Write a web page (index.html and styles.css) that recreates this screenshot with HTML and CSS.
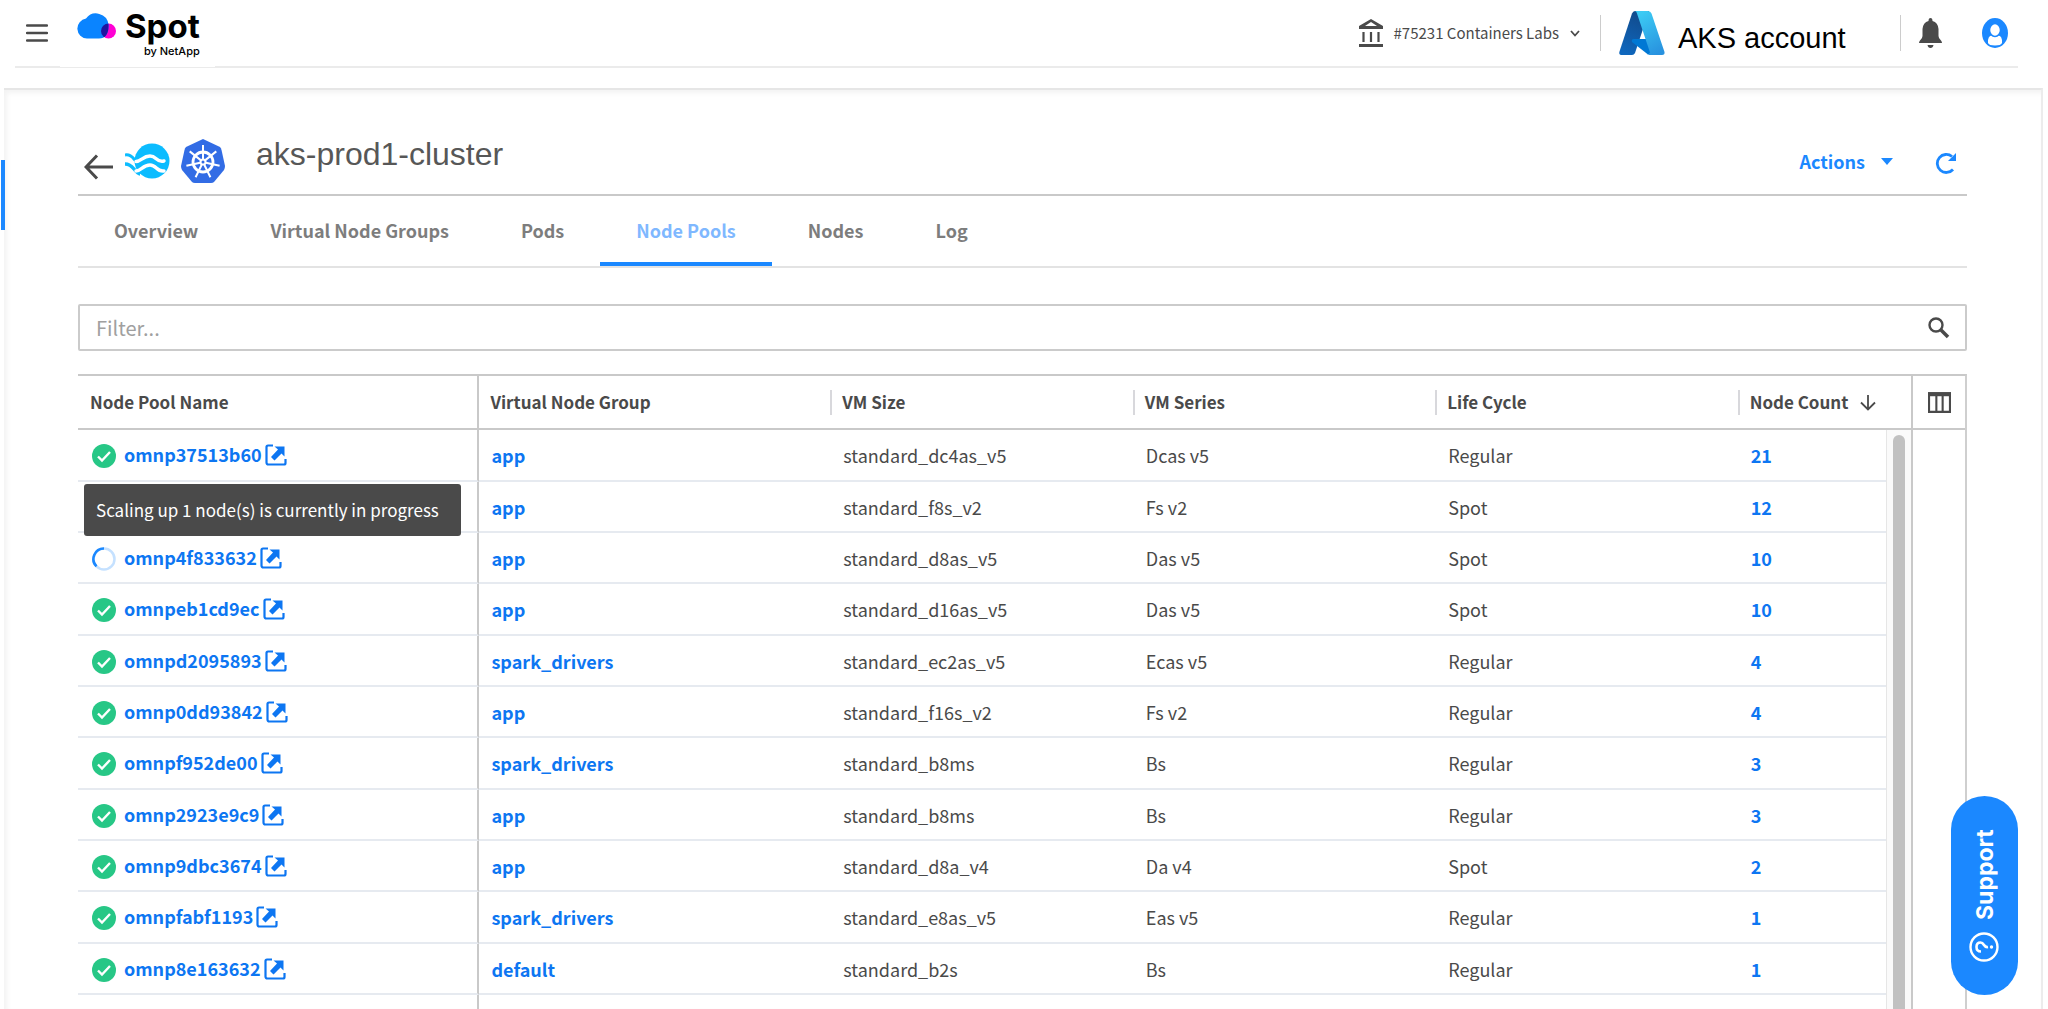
FILE: index.html
```html
<!DOCTYPE html>
<html lang="en">
<head>
<meta charset="utf-8">
<title>aks-prod1-cluster – Node Pools</title>
<link rel="stylesheet" href="styles.css">
</head>
<body>
<svg class="sprite" aria-hidden="true">
  <symbol id="ok" viewBox="0 0 24 24"><circle cx="12" cy="12" r="12" fill="#27c786"/><path d="M6 12.500l4 4 8-8.500" fill="none" stroke="#fff" stroke-width="2.400"/></symbol>
  <symbol id="busy" viewBox="0 0 24 24"><circle cx="12" cy="12" r="10.500" fill="none" stroke="#c5e1ff" stroke-width="2.500"/><path d="M12 1.500A10.500 10.500 0 0 0 4.500 19.400" fill="none" stroke="#1b88ff" stroke-width="2.500"/></symbol>
  <symbol id="open" viewBox="0 0 22 22"><path d="M8 1.500H3Q1.500 1.500 1.500 3V18.500Q1.500 20.500 3.500 20.500H19Q20.500 20.500 20.500 19V15" fill="none" stroke="#0d76f2" stroke-width="2.200"/><path d="M9.500 2.500H19.500V12.500L16.500 9.500 9.500 16.500 6 13 13 5.500z" fill="#0d76f2"/></symbol>
</svg>

<header class="topbar">
  <button class="icon-btn menu" aria-label="Menu"><svg width="22" height="18" viewBox="0 0 22 18"><path d="M1 1.500h20M1 9h20M1 16.500h20" stroke="#4a4a4a" stroke-width="2.400" stroke-linecap="round"/></svg></button>
  <a class="brand" href="#" aria-label="Spot by NetApp">
    <svg width="40" height="27" viewBox="0 0 40 27"><defs><clipPath id="cloud"><path d="M10 25.500A10 10 0 0 1 9 5.600A12.500 12.500 0 0 1 31.500 11.500Q32 25.500 22 25.500z"/></clipPath></defs><circle cx="31.500" cy="18" r="7.500" fill="#ff00d4"/><g clip-path="url(#cloud)"><path d="M0 0h40v27H0z" fill="#0a84ff"/><circle cx="31.500" cy="18" r="7.500" fill="#1f14a0"/></g></svg>
    <span class="brand-text"><span class="brand-name">Spot</span><span class="brand-by">by NetApp</span></span>
  </a>
  <button class="org">
    <svg width="24" height="29" viewBox="0 0 24 29"><path d="M12 0L24 7V10H0V7z M12 3L6 7H18z" fill="#4a4a4a" fill-rule="evenodd"/><path d="M4.500 13v10M12 13v10M19.500 13v10" stroke="#4a4a4a" stroke-width="2.200"/><path d="M0 25h24v3H0z" fill="#4a4a4a"/></svg>
    <span>#75231 Containers Labs</span>
    <svg width="10" height="7" viewBox="0 0 10 7"><path d="M1 1l4 4.500L9 1" fill="none" stroke="#4a4a4a" stroke-width="1.800"/></svg>
  </button>
  <div class="account">
    <svg width="46" height="44" viewBox="0 0 46 44"><defs><linearGradient id="a1" x1=".6" y1="0" x2=".3" y2="1"><stop offset="0" stop-color="#114a8b"/><stop offset="1" stop-color="#0f67bd"/></linearGradient><linearGradient id="a2" x1=".3" y1="0" x2=".7" y2="1"><stop offset="0" stop-color="#3ccbf4"/><stop offset="1" stop-color="#2892df"/></linearGradient></defs><path d="M16 0H30L16 42Q15 44 13 44H3Q-.5 44 .5 40.500L13 2.500Q14 0 16 0z" fill="url(#a1)"/><path d="M20 28H37V40L29 43.500 13 31Q12 28 15 28z" fill="#0078d4"/><path d="M16 0H29Q31.500 0 32.500 2.500L45.500 41Q46 44 43 44H28Q32 43.500 30.500 40L18 2.500Q17.500 0 16 0z" fill="url(#a2)"/></svg>
    <span>AKS account</span>
  </div>
  <div class="tools">
    <button class="icon-btn" aria-label="Notifications"><svg width="23" height="30" viewBox="0 0 23 30"><path d="M11.500 0Q13.500 0 13.500 3Q19 4.500 19.500 11V18Q19.500 20.500 22 22.500 23 23.500 23 25H0Q0 23.500 1 22.500 3.500 20.500 3.500 18V11Q4 4.500 9.500 3Q9.500 0 11.500 0zM8.500 27H14.500Q14 30 11.500 30T8.500 27z" fill="#4a4a4a"/></svg></button>
    <button class="icon-btn" aria-label="Profile"><svg width="28" height="30" viewBox="0 0 28 30"><ellipse cx="14" cy="15" rx="13" ry="15" fill="#1b88ff"/><path d="M7 25Q6.500 17.500 11 17.500H17Q21.500 17.500 21 25Q20 27.500 14 27.500T7 25z" fill="#fff"/><ellipse cx="14" cy="12" rx="5.500" ry="6.500" fill="#fff" stroke="#1b88ff" stroke-width="1.500"/></svg></button>
  </div>
</header>

<main class="panel">
  <div class="title-bar">
    <button class="icon-btn back" aria-label="Back"><svg width="30" height="26" viewBox="0 0 30 26"><path d="M29 13H2M13 1.500L2 13 13 24.500" fill="none" stroke="#4a4a4a" stroke-width="3"/></svg></button>
    <svg class="ocean" width="45" height="36" viewBox="0 0 45 36"><circle cx="27" cy="18" r="17.500" fill="#0cbcff"/><path d="M0 12Q5 11 9 16T16 20" fill="none" stroke="#0cbcff" stroke-width="3"/><path d="M0 21Q5 21 9 26T15 31" fill="none" stroke="#0cbcff" stroke-width="3.500"/><path d="M11 18.500C16 18.500 18 13 25 13S31 20 39 18M11 28C16 28 18 22 25 22S31 29 39 28" fill="none" stroke="#fff" stroke-width="3.400" stroke-linecap="round"/></svg>
    <svg class="kube" width="44" height="44" viewBox="0 0 44 44"><path d="M22 0L39 8Q40 9 40.500 11L44 27Q44 29 43 31L33 43Q32 44 30 44H14Q12 44 11 43L1 31Q0 29 0 27L3.500 11Q4 9 5 8z" fill="#326ce5"/><g fill="none" stroke="#fff" stroke-width="2"><circle cx="22" cy="23" r="10" stroke-width="2.800"/><circle cx="22" cy="23" r="2.500"/><path d="M22 20V6M24.300 21.100L35.300 12.400M24.900 23.700L38.600 26.800M23.300 25.700L29.400 38.300M20.700 25.700L14.600 38.300M19.100 23.700L5.400 26.800M19.700 21.100L8.700 12.400"/></g></svg>
    <h1>aks-prod1-cluster</h1>
    <button class="actions">Actions <svg width="12" height="7" viewBox="0 0 12 7"><path d="M0 0h12L6 7z" fill="#1b88ff"/></svg></button>
    <button class="icon-btn refresh" aria-label="Refresh"><svg width="22" height="22" viewBox="0 0 22 22"><path d="M18 17.500A9 9 0 1 1 17 4.500" fill="none" stroke="#1b88ff" stroke-width="2.800"/><path d="M21 1V9H13z" fill="#1b88ff"/></svg></button>
  </div>

  <nav class="tabs">
    <a href="#">Overview</a><a href="#">Virtual Node Groups</a><a href="#">Pods</a><a href="#" class="active" aria-current="page">Node Pools</a><a href="#">Nodes</a><a href="#">Log</a>
  </nav>

  <label class="filter">
    <input type="text" placeholder="Filter..." aria-label="Filter">
    <svg width="22" height="22" viewBox="0 0 22 22"><circle cx="8" cy="8" r="6.500" fill="none" stroke="#4a4a4a" stroke-width="2.400"/><path d="M12.500 12.500L20 20" stroke="#4a4a4a" stroke-width="3.600"/></svg>
  </label>

  <section class="grid">
    <div class="grid-main">
      <table>
        <colgroup><col class="c-name"><col class="c-vng"><col class="c-mid"><col class="c-mid"><col class="c-mid"><col></colgroup>
        <thead><tr><th>Node Pool Name</th><th>Virtual Node Group</th><th>VM Size</th><th>VM Series</th><th>Life Cycle</th><th>Node Count <svg width="16" height="16" viewBox="0 0 16 16"><path d="M8 0V14M1 7.500l7 7 7-7" fill="none" stroke="#4a4a4a" stroke-width="1.800"/></svg></th></tr></thead>
        <tbody>
          <tr><td><svg class="st"><use href="#ok"/></svg><a href="#">omnp37513b60<svg class="ext"><use href="#open"/></svg></a></td><td><a href="#">app</a></td><td>standard_dc4as_v5</td><td>Dcas v5</td><td>Regular</td><td><a href="#">21</a></td></tr>
          <tr><td></td><td><a href="#">app</a></td><td>standard_f8s_v2</td><td>Fs v2</td><td>Spot</td><td><a href="#">12</a></td></tr>
          <tr><td><svg class="st"><use href="#busy"/></svg><a href="#">omnp4f833632<svg class="ext"><use href="#open"/></svg></a><div class="tip" role="tooltip">Scaling up 1 node(s) is currently in progress</div></td><td><a href="#">app</a></td><td>standard_d8as_v5</td><td>Das v5</td><td>Spot</td><td><a href="#">10</a></td></tr>
          <tr><td><svg class="st"><use href="#ok"/></svg><a href="#">omnpeb1cd9ec<svg class="ext"><use href="#open"/></svg></a></td><td><a href="#">app</a></td><td>standard_d16as_v5</td><td>Das v5</td><td>Spot</td><td><a href="#">10</a></td></tr>
          <tr><td><svg class="st"><use href="#ok"/></svg><a href="#">omnpd2095893<svg class="ext"><use href="#open"/></svg></a></td><td><a href="#">spark_drivers</a></td><td>standard_ec2as_v5</td><td>Ecas v5</td><td>Regular</td><td><a href="#">4</a></td></tr>
          <tr><td><svg class="st"><use href="#ok"/></svg><a href="#">omnp0dd93842<svg class="ext"><use href="#open"/></svg></a></td><td><a href="#">app</a></td><td>standard_f16s_v2</td><td>Fs v2</td><td>Regular</td><td><a href="#">4</a></td></tr>
          <tr><td><svg class="st"><use href="#ok"/></svg><a href="#">omnpf952de00<svg class="ext"><use href="#open"/></svg></a></td><td><a href="#">spark_drivers</a></td><td>standard_b8ms</td><td>Bs</td><td>Regular</td><td><a href="#">3</a></td></tr>
          <tr><td><svg class="st"><use href="#ok"/></svg><a href="#">omnp2923e9c9<svg class="ext"><use href="#open"/></svg></a></td><td><a href="#">app</a></td><td>standard_b8ms</td><td>Bs</td><td>Regular</td><td><a href="#">3</a></td></tr>
          <tr><td><svg class="st"><use href="#ok"/></svg><a href="#">omnp9dbc3674<svg class="ext"><use href="#open"/></svg></a></td><td><a href="#">app</a></td><td>standard_d8a_v4</td><td>Da v4</td><td>Spot</td><td><a href="#">2</a></td></tr>
          <tr><td><svg class="st"><use href="#ok"/></svg><a href="#">omnpfabf1193<svg class="ext"><use href="#open"/></svg></a></td><td><a href="#">spark_drivers</a></td><td>standard_e8as_v5</td><td>Eas v5</td><td>Regular</td><td><a href="#">1</a></td></tr>
          <tr><td><svg class="st"><use href="#ok"/></svg><a href="#">omnp8e163632<svg class="ext"><use href="#open"/></svg></a></td><td><a href="#">default</a></td><td>standard_b2s</td><td>Bs</td><td>Regular</td><td><a href="#">1</a></td></tr>
          <tr class="rest"><td></td><td></td><td></td><td></td><td></td><td></td></tr>
        </tbody>
      </table>
      <div class="track"><div class="thumb"></div></div>
    </div>
    <div class="grid-side">
      <button class="icon-btn cols" aria-label="Columns"><svg width="23" height="21" viewBox="0 0 22 20"><path d="M1 2H21V19H1zM8 3V19M14 3V19" fill="none" stroke="#4a4a4a" stroke-width="2"/><path d="M0 0H22V4H0z" fill="#4a4a4a"/></svg></button>
    </div>
  </section>
</main>

<button class="support">
  <svg width="30" height="30" viewBox="0 0 30 30"><circle cx="15" cy="15" r="13.500" fill="none" stroke="#fff" stroke-width="2.400"/><path d="M10.500 12Q10.500 7.500 15 7.500T19.500 11.500Q19.500 13.500 17 15T15 19" fill="none" stroke="#fff" stroke-width="2.600"/><circle cx="15" cy="22.500" r="1.700" fill="#fff"/></svg>
  <span>Support</span>
</button>
</body>
</html>
```
FILE: styles.css
```css
* { box-sizing: border-box; }
body {
  margin: 0;
  height: 100vh;
  display: flex;
  flex-direction: column;
  overflow: hidden;
  background: #fff;
  color: #4a4a4a;
  font: 18px/24px "Noto Sans CJK SC", "Noto Sans", sans-serif;
}
.sprite { position: absolute; width: 0; height: 0; }
svg { flex: none; }
button { font: inherit; color: inherit; background: none; border: 0; padding: 0; display: flex; align-items: center; }
a { color: #0d76f2; text-decoration: none; font-weight: 700; }

.topbar {
  height: 68px;
  margin: 0 30px 20px 15px;
  padding-left: 11px;
  display: flex;
  align-items: center;
  border-bottom: 2px solid #ebebeb;
  flex: none;
}
.brand {
  display: flex;
  align-items: flex-start;
  gap: 8px;
  margin: 0 auto 0 12px;
  padding: 14px 17px 0;
  height: 68px;
  background: #fff;
  width: 155px;
  color: #000;
}
.brand-text { display: flex; flex-direction: column; align-items: flex-end; }
.brand-name { font: 700 33px/26px Inter, sans-serif; }
.brand-by { font: 500 11px/20px Inter, sans-serif; margin-top: 2px; }
.org { font-size: 15px; gap: 11px; padding-right: 20px; height: 36px; border-right: 1px solid #ccc; }
.account {
  display: flex;
  align-items: center;
  gap: 13px;
  padding-left: 18px;
  width: 299px;
  font: 29px/36px "Liberation Sans", Arial, sans-serif;
  color: #000;
}
.account span { padding-top: 10px; }
.tools { display: flex; align-items: center; gap: 39px; height: 36px; padding: 0 9px 0 18px; border-left: 1px solid #ccc; }

.panel {
  flex: 1;
  min-height: 0;
  display: flex;
  flex-direction: column;
  margin: 0 5px 0 4px;
  padding: 0 74px;
  border-top: 2px solid #e6e6e6;
  border-right: 2px solid #ececec;
  box-shadow: inset 3px 3px 5px #f3f3f3;
}
.panel::before { content: ""; position: absolute; left: 1px; top: 160px; width: 4px; height: 70px; background: #1b88ff; }
.title-bar { display: flex; align-items: center; height: 106px; padding: 38px 10px 0 6px; border-bottom: 2px solid #c9c9c9; flex: none; }
.back { margin: 12px 11px 0 0; }
.kube { margin: 0 31px 0 11px; }
h1 { margin: 0 auto 14px 0; font: 32px/36px "Liberation Sans", Arial, sans-serif; color: #575757; }
.actions { color: #1b88ff; font-weight: 700; gap: 16px; }
.refresh { margin: 4px 0 0 42px; }

.tabs { display: flex; height: 72px; border-bottom: 2px solid #e3e3e3; flex: none; }
.tabs a { padding: 22px 36px 0; color: #7d7d7d; }
.tabs .active { color: #7fb8ff; border-bottom: 4px solid #1b88ff; }

.filter { display: flex; align-items: center; height: 47px; margin: 36px 0 23px; padding: 0 15px 0 16px; border: 2px solid #cbcbcb; border-radius: 2px; flex: none; }
.filter input { flex: 1; border: 0; outline: 0; padding: 0; font: 20px/28px "Noto Sans CJK SC", sans-serif; color: #4a4a4a; }
.filter input::placeholder { color: #a0a0a0; }

.grid { flex: 1; min-height: 0; display: flex; border-top: 2px solid #c9c9c9; border-right: 2px solid #cfcfcf; }
.grid-main { flex: 1; position: relative; }
table { width: 100%; height: 100%; table-layout: fixed; border-collapse: separate; border-spacing: 0; }
.c-name { width: 21.9%; }
.c-vng { width: 19.2%; }
.c-mid { width: 16.5%; }
th { position: relative; height: 54px; padding: 0 11px; text-align: left; border-bottom: 2px solid #c9c9c9; font-size: 17px; white-space: nowrap; }
th svg { margin-left: 8px; vertical-align: -2px; }
th + th + th::before { content: ""; position: absolute; left: -1px; top: 14px; width: 2px; height: 25px; background: #d8d8dc; }
td { position: relative; height: 51px; padding: 0 12px; border-bottom: 2px solid #e6eaf0; white-space: nowrap; }
tr:nth-child(3n+1) td { height: 52px; }
th:first-child, td:first-child { border-right: 2px solid #c9c9c9; }
th:first-child { padding-left: 12px; }
td:first-child { padding-left: 14px; }
.rest td { border-bottom: 0; }
tr.rest:nth-child(n) td { height: auto; }
.st { width: 24px; height: 24px; margin-right: 8px; vertical-align: -6px; }
.ext { width: 22px; height: 22px; margin-left: 3px; vertical-align: -4px; }
.tip { position: absolute; left: 6px; bottom: 46px; height: 52px; padding: 0 22px 0 12px; line-height: 52px; background: #4a4a4a; color: #fff; border-radius: 3px; font-size: 17px; z-index: 2; }
.track { position: absolute; top: 54px; right: 0; bottom: 0; width: 25px; padding: 5px 6px 0; background: #fafafa; border-left: 1px solid #e6e6e6; }
.thumb { height: 100%; border-radius: 6px 6px 0 0; background: #c1c1c1; }
.grid-side { width: 54px; border-left: 2px solid #c9c9c9; }
.cols { width: 100%; height: 54px; justify-content: center; border-bottom: 2px solid #c9c9c9; }

.support {
  position: absolute;
  right: 30px;
  bottom: 14px;
  width: 67px;
  height: 199px;
  gap: 12px;
  justify-content: center;
  writing-mode: vertical-rl;
  transform: rotate(180deg);
  border-radius: 34px;
  background: #1b88ff;
  color: #fff;
  font: 700 23px/26px Inter, sans-serif;
}
.support svg { transform: rotate(90deg); }
```
